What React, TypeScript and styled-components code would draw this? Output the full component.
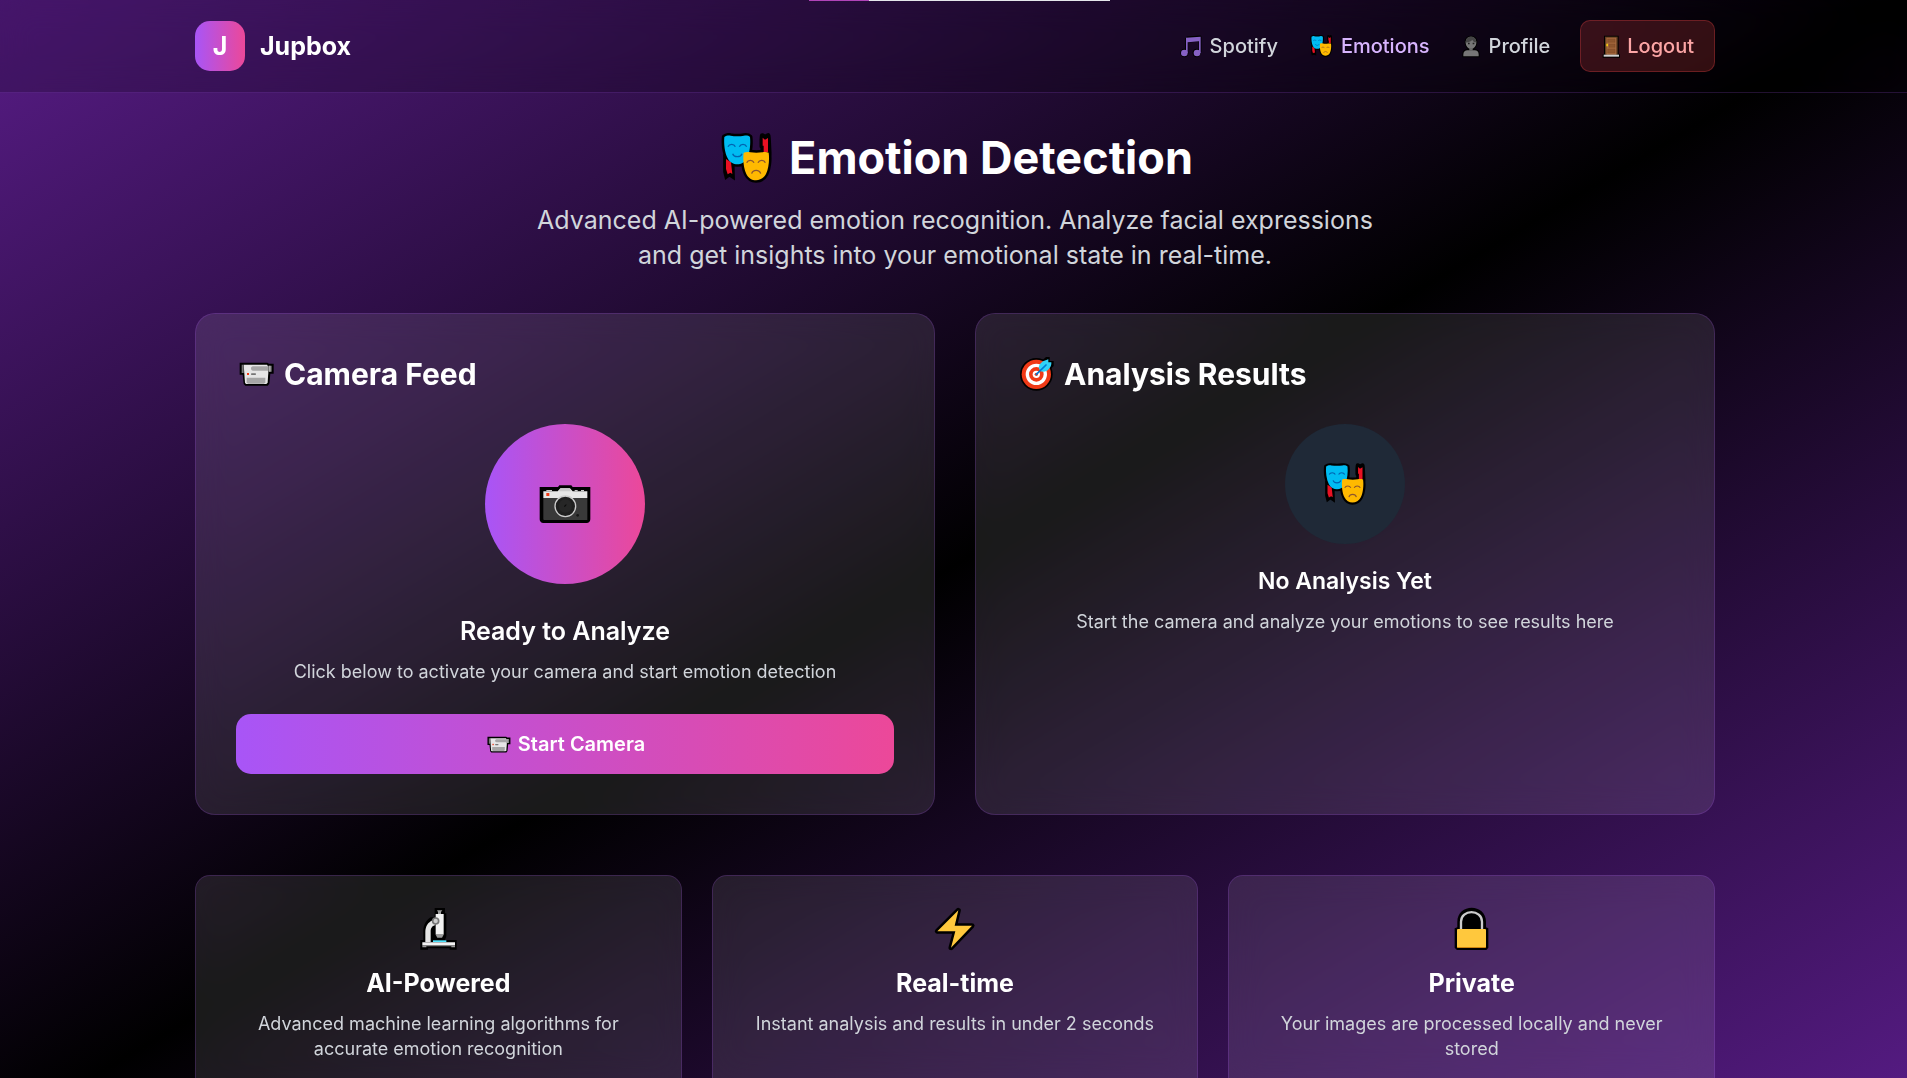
import React from 'react';
import styled, { createGlobalStyle, css } from 'styled-components';

const GlobalStyle = createGlobalStyle`
  *, *::before, *::after { box-sizing: border-box; }
  html { background: #000; }
  body {
    margin: 0;
    font-family: Inter, 'Liberation Sans', sans-serif;
    color: #fff;
  }
  h1, h2, h3, p { margin: 0; }
`;

const accent = 'linear-gradient(to right, #a855f7, #ec4899)';

/* ---------- layout ---------- */

const Page = styled.div`
  position: relative;
  min-height: 100vh;
  padding-left: 3px;
  background: linear-gradient(to bottom right, #581c87, #000, #581c87);
`;

const Header = styled.header`
  margin-left: -3px;
  padding-left: 3px;
  background: rgba(0, 0, 0, 0.2);
  border-bottom: 1px solid rgba(168, 85, 247, 0.2);
  backdrop-filter: blur(16px);
`;

const container = css`
  max-width: 1600px;
  margin: 0 auto;
  @media (max-width: 700px) {
    padding-left: 20px;
    padding-right: 20px;
  }
`;

const HeaderInner = styled.div`
  padding: 20px 40px;
  ${container}
  display: flex;
  flex-wrap: wrap;
  gap: 20px;
  align-items: center;
  justify-content: space-between;
`;

const Main = styled.main`
  padding: 40px;
  ${container}
`;

const Progress = styled.div`
  position: absolute;
  z-index: 2;
  top: 0;
  left: 50%;
  width: 301px;
  height: 1px;
  margin-left: -145px;
  background: #e5e7eb;
`;

const ProgressFill = styled.div`
  height: 100%;
  background: #b044b8;
`;

/* ---------- header ---------- */

const Brand = styled.a`
  display: flex;
  align-items: center;
  gap: 15px;
  color: #fff;
  font-size: 25px;
  line-height: 35px;
  font-weight: 700;
  text-decoration: none;
`;

const BrandMark = styled.span`
  display: flex;
  align-items: center;
  justify-content: center;
  width: 50px;
  height: 50px;
  border-radius: 15px;
  background: ${accent};
`;

const Nav = styled.nav`
  display: flex;
  flex-wrap: wrap;
  align-items: center;
  gap: 30px;
`;

const navItem = css`
  display: flex;
  align-items: center;
  gap: 6px;
  font-family: inherit;
  font-size: 20px;
  line-height: 30px;
  font-weight: 500;
`;

const NavLink = styled.a<{ $active?: boolean }>`
  ${navItem}
  color: ${(p) => (p.$active ? '#d8b4fe' : '#d1d5db')};
  text-decoration: none;
`;

const LogoutButton = styled.button`
  ${navItem}
  padding: 10px 20px;
  color: #fca5a5;
  background: rgba(239, 68, 68, 0.2);
  border: 1px solid rgba(239, 68, 68, 0.3);
  border-radius: 10px;
  cursor: pointer;
`;

/* ---------- content ---------- */

const Intro = styled.section`
  margin-bottom: 40px;
  text-align: center;
`;

const PageTitle = styled.h1`
  display: flex;
  align-items: center;
  justify-content: center;
  gap: 12px;
  margin-bottom: 20px;
  font-size: 45px;
  line-height: 50px;
  font-weight: 700;
`;

const Lead = styled.p`
  max-width: 840px;
  margin: 0 auto;
  font-size: 25px;
  line-height: 35px;
  color: #d1d5db;
`;

const Panels = styled.div`
  display: grid;
  grid-template-columns: repeat(2, minmax(0, 1fr));
  gap: 40px;
  @media (max-width: 1000px) {
    grid-template-columns: minmax(0, 1fr);
  }
`;

const glass = css`
  background: rgba(255, 255, 255, 0.1);
  border: 1px solid rgba(168, 85, 247, 0.2);
  backdrop-filter: blur(16px);
`;

const Panel = styled.section`
  ${glass}
  padding: 40px;
  border-radius: 20px;
`;

const PanelTitle = styled.h2`
  display: flex;
  align-items: center;
  gap: 8px;
  margin-bottom: 30px;
  font-size: 30px;
  line-height: 40px;
  font-weight: 700;
`;

const PanelBody = styled.div`
  text-align: center;
`;

const Disc = styled.div<{ $size: number; $fill: string; $space: number }>`
  display: flex;
  align-items: center;
  justify-content: center;
  width: ${(p) => p.$size}px;
  height: ${(p) => p.$size}px;
  margin: 0 auto ${(p) => p.$space}px;
  border-radius: 50%;
  background: ${(p) => p.$fill};
`;

const Subtitle = styled.h3<{ $size?: number; $weight?: number }>`
  margin-bottom: 10px;
  font-size: ${(p) => p.$size ?? 25}px;
  line-height: 35px;
  font-weight: ${(p) => p.$weight ?? 600};
`;

const Note = styled.p`
  font-size: 18px;
  line-height: 25px;
  color: #d1d5db;
`;

const StartButton = styled.button`
  display: flex;
  align-items: center;
  justify-content: center;
  gap: 6px;
  width: 100%;
  margin-top: 30px;
  padding: 15px 30px;
  border: 0;
  border-radius: 15px;
  background: ${accent};
  color: #fff;
  font-family: inherit;
  font-size: 20px;
  line-height: 30px;
  font-weight: 600;
  cursor: pointer;
`;

const Features = styled.div`
  display: grid;
  grid-template-columns: repeat(3, minmax(0, 1fr));
  gap: 30px;
  margin-top: 60px;
  @media (max-width: 1000px) {
    grid-template-columns: minmax(0, 1fr);
  }
`;

const Feature = styled.article`
  ${glass}
  padding: 30px;
  border-radius: 15px;
  text-align: center;
`;

const FeatureIcon = styled.div`
  display: flex;
  justify-content: center;
  margin-bottom: 15px;
`;

/* ---------- pictograms ---------- */

const Glyph = styled.svg`
  display: block;
  flex: none;
`;

type IconProps = { w: number; h: number };

const Masks = ({ w, h }: IconProps) => (
  <Glyph width={w} height={h} viewBox="54 400 180 150" aria-hidden="true">
    <g stroke="#000" strokeWidth="15" strokeLinejoin="round">
      <path d="M190 408l8 5 9-5 1 8 2 40-1 10h-17V440h-3V420z" />
      <path d="M80 478v38l3 12 8-6 9 6-1-36z" strokeLinejoin="miter" />
      <path d="M76 412c6-5 14-5 19-4 12 2 28 2 40 0 8-1 14 0 18 4 2 20 0 46-9 64-6 12-18 18-29 18s-23-6-29-18c-9-18-12-44-10-64z" />
      <path d="M134 459c8-3 14-2 20-1 12 2 24 2 36 0 7-1 14-1 19 1 3 20 0 48-8 64-6 12-18 19-30 19s-23-7-29-19c-8-16-11-44-8-64z" />
    </g>
    <path d="M191 414l7 6 9-5v42h-13V438h-3z" fill="#e81123" />
    <path d="M81 478v30l5 16 8-5 6 4-4-35z" fill="#e81123" />
    <path d="M76 412c6-5 14-5 19-4 12 2 28 2 40 0 8-1 14 0 18 4 2 20 0 46-9 64-6 12-18 18-29 18s-23-6-29-18c-9-18-12-44-10-64z" fill="#00bcf2" />
    <path d="M134 459c8-3 14-2 20-1 12 2 24 2 36 0 7-1 14-1 19 1 3 20 0 48-8 64-6 12-18 19-30 19s-23-7-29-19c-8-16-11-44-8-64z" fill="#ffb900" />
    <g fill="none" strokeWidth="4">
      <path d="M87 441c4-9 18-9 22 0M121 441c4-9 18-9 22 0M101 462c4 12 24 12 28 0" stroke="#0063b1" />
      <path d="M143 489c4-9 18-9 22 0M177 489c4-9 18-9 22 0M158 522c4-13 23-13 27 0" stroke="#8e562e" />
    </g>
  </Glyph>
);

const Music = ({ w, h }: IconProps) => (
  <Glyph width={w} height={h} viewBox="1431 97 81 81" aria-hidden="true">
    <g fill="none" stroke="#000" strokeWidth="9" strokeLinejoin="round">
      <path d="M1460 112l40-3v46M1460 112v43M1460 122l40-4" />
      <circle cx="1453" cy="157" r="8" />
      <circle cx="1490" cy="157" r="8" />
    </g>
    <path d="M1458 111l44-3v49h-5v-35l-34 3v32h-5z" fill="#8661c5" />
    <circle cx="1453" cy="157" r="10" fill="#8661c5" />
    <circle cx="1491" cy="157" r="10" fill="#8661c5" />
  </Glyph>
);

const Person = ({ w, h }: IconProps) => (
  <Glyph width={w} height={h} viewBox="0 0 69 81" aria-hidden="true">
    <path d="M33 11c10 0 16 7 16 17 0 12-7 20-16 20s-16-8-16-20c0-10 6-17 16-17zM10 70V64c0-8 6-12 12-12h22c7 0 12 4 12 12v6z" fill="#767676" stroke="#000" strokeWidth="6" paintOrder="stroke" />
    <path d="M17 29c0-12 6-18 16-18s16 7 16 17c-6 0-10-2-12-8-4 6-12 6-20 9z" fill="#454545" />
    <path d="M24 29h5v5h-5zM38 29h5v5h-5z" fill="#1f1f1f" />
    <path d="M28 45h10v8H28z" fill="#686868" />
  </Glyph>
);

const Door = ({ w, h }: IconProps) => (
  <Glyph width={w} height={h} viewBox="0 0 60 81" aria-hidden="true">
    <path d="M9 8h44v56h4v10H5V64h4z" fill="#000" />
    <path d="M12 11h38v54H12z" fill="#603d20" />
    <path d="M16 14h30v51H16z" fill="#a4683c" />
    <path d="M20 18h22v10H20zM24 33h18v10H24zM20 48h22v12H20z" fill="#8e562e" stroke="#7a4724" strokeWidth="1" />
    <path d="M16 32h5v8h-5z" fill="#f2c811" />
    <path d="M8 65h46v6H8z" fill="#d2d2d2" />
  </Glyph>
);

const Camcorder = ({ w, h }: IconProps) => (
  <Glyph width={w} height={h} viewBox="138 133 120 120" aria-hidden="true">
    <path d="M149 159h83l5 3h14v30h-10l-3 30-5 6h-67l-5-5-3-28h-9z" fill="#000" />
    <path d="M161 165h70l4 6v17l-2 31-4 4h-61l-3-4z" fill="#e6e6e6" />
    <path d="M155 165h6v25h-6zM235 168h10v18h-10z" fill="#767676" />
    <path d="M189 170h46v13h-46c-8 0-8-13 0-13z" fill="#a6a6a6" />
    <path d="M238 168h3v18h-3z" fill="#ccc" />
    <path d="M170 204h56v14l-4 4h-48l-4-4z" fill="#a6a6a6" />
    <rect x="171" y="190" width="6" height="6" fill="#f03a17" />
    <rect x="183" y="191" width="15" height="5" rx="2" fill="#767676" />
  </Glyph>
);

const Target = ({ w, h }: IconProps) => (
  <Glyph width={w} height={h} viewBox="138 133 120 120" aria-hidden="true">
    <circle cx="199" cy="194" r="49" fill="#000" />
    <path d="M203 180l1-16 24-22h11v12h12v15l-22 23-14 1z" fill="#000" />
    <circle cx="199" cy="194" r="44" fill="#f03a17" />
    <circle cx="199" cy="194" r="27" fill="none" stroke="#fff" strokeWidth="10" />
    <circle cx="199" cy="194" r="11" fill="#fff" />
    <circle cx="199" cy="194" r="5" fill="#f03a17" />
    <path d="M207 177c-2-10 5-17 12-22l16-6v9h9c1 12-6 20-13 25-8 4-14 4-19 2z" fill="#31d2f7" />
    <path d="M199 194l29-28" stroke="#0078d4" strokeWidth="5" strokeLinecap="round" />
  </Glyph>
);

const Camera = ({ w, h }: IconProps) => (
  <Glyph width={w} height={h} viewBox="194 192 180 180" aria-hidden="true">
    <path d="M208 231h55l4-5h36l4 5h53v97c0 7-5 11-11 11H219c-7 0-11-5-11-11z" fill="#000" />
    <path d="M219 264h132v66H223c-3 0-4-2-4-4z" fill="#393939" />
    <path d="M219 244h43l8-9h29l8 9h44v20H219z" fill="#e6e6e6" />
    <path d="M271 235h27l4 9h-36z" fill="#ccc" />
    <path d="M228 240h17v4h-17zM313 240h9v4h-9zM332 240h9v4h-9z" fill="#ccc" />
    <rect x="228" y="249" width="9" height="9" fill="#f03a17" />
    <circle cx="285" cy="289" r="31" fill="#1f1f1f" stroke="#ccc" strokeWidth="4" />
    <circle cx="285" cy="288" r="20" fill="#262626" />
    <path d="M281 291c1-5 4-7 8-8-1 5-4 8-8 8z" fill="#0c0c0c" />
    <circle cx="322" cy="316" r="4" fill="#171717" />
  </Glyph>
);

const Microscope = ({ w, h }: IconProps) => (
  <Glyph width={w} height={h} viewBox="48 48 135 135" aria-hidden="true">
    <path d="M104 54h31v16h4v69l-4 11h35v29h-21v-4H84v4H61v-29h9v-27c0-17 7-31 22-41h12z" fill="#000" />
    <path d="M76 156v-29c0-18 8-30 22-36l8 14c-10 3-14 9-14 21v30z" fill="#e6e6e6" />
    <path d="M107 72h24v62h-24z" fill="#f2f2f2" />
    <path d="M107 134h24l-5 9h-14z" fill="#999" />
    <path d="M111 61h16l-4 5v6h-9v-6z" fill="#999" />
    <circle cx="107" cy="93" r="9" fill="#ccc" stroke="#767676" strokeWidth="5" />
    <path d="M99 151h40v5H99z" fill="#50e6ff" />
    <path d="M67 157h98v9H67z" fill="#f2f2f2" />
    <path d="M67 166h98v6h-11v-3H79v3H67z" fill="#999" />
  </Glyph>
);

const Bolt = ({ w, h }: IconProps) => (
  <Glyph width={w} height={h} viewBox="37 48 135 135" aria-hidden="true">
    <path d="M116 61L53 124h54l-13 49 63-66h-52z" fill="#ffc83d" stroke="#000" strokeWidth="15" strokeLinejoin="round" paintOrder="stroke" />
  </Glyph>
);

const Lock = ({ w, h }: IconProps) => (
  <Glyph width={w} height={h} viewBox="57 48 135 135" aria-hidden="true">
    <path d="M82 112V95c0-56 86-56 86 0v17l7 3v58l-6 7H81l-7-7v-58z" fill="#000" />
    <path d="M93 118V95c0-38 63-38 63 0v23" fill="none" stroke="#ccc" strokeWidth="7" />
    <rect x="81" y="117" width="87" height="56" rx="3" fill="#ffc83d" />
    <path d="M81 171h87v2H81z" fill="#d67d00" />
  </Glyph>
);

/* ---------- page ---------- */

const features = [
  { Icon: Microscope, title: 'AI-Powered', text: 'Advanced machine learning algorithms for accurate emotion recognition' },
  { Icon: Bolt, title: 'Real-time', text: 'Instant analysis and results in under 2 seconds' },
  { Icon: Lock, title: 'Private', text: 'Your images are processed locally and never stored' },
];

export default function App() {
  return (
    <>
      <GlobalStyle />
      <Page>
        <Progress aria-hidden="true">
          <ProgressFill style={{ width: '20%' }} />
        </Progress>
        <Header>
          <HeaderInner>
            <Brand href="#">
              <BrandMark>J</BrandMark>
              Jupbox
            </Brand>
            <Nav>
              <NavLink href="#spotify"><Music w={27} h={27} />Spotify</NavLink>
              <NavLink href="#emotions" $active aria-current="page"><Masks w={27} h={22} />Emotions</NavLink>
              <NavLink href="#profile"><Person w={23} h={27} />Profile</NavLink>
              <LogoutButton type="button"><Door w={20} h={27} />Logout</LogoutButton>
            </Nav>
          </HeaderInner>
        </Header>
        <Main>
          <Intro>
            <PageTitle><Masks w={60} h={50} />Emotion Detection</PageTitle>
            <Lead>
              Advanced AI-powered emotion recognition. Analyze facial expressions and get insights
              into your emotional state in real-time.
            </Lead>
          </Intro>
          <Panels>
            <Panel>
              <PanelTitle><Camcorder w={40} h={40} />Camera Feed</PanelTitle>
              <PanelBody>
                <Disc $size={160} $fill={accent} $space={30}><Camera w={60} h={60} /></Disc>
                <Subtitle>Ready to Analyze</Subtitle>
                <Note>Click below to activate your camera and start emotion detection</Note>
                <StartButton type="button"><Camcorder w={27} h={27} />Start Camera</StartButton>
              </PanelBody>
            </Panel>
            <Panel>
              <PanelTitle><Target w={40} h={40} />Analysis Results</PanelTitle>
              <PanelBody>
                <Disc $size={120} $fill="#1f2937" $space={20}><Masks w={50} h={42} /></Disc>
                <Subtitle $size={23}>No Analysis Yet</Subtitle>
                <Note>Start the camera and analyze your emotions to see results here</Note>
              </PanelBody>
            </Panel>
          </Panels>
          <Features>
            {features.map(({ Icon, title, text }) => (
              <Feature key={title}>
                <FeatureIcon><Icon w={45} h={45} /></FeatureIcon>
                <Subtitle $weight={700}>{title}</Subtitle>
                <Note>{text}</Note>
              </Feature>
            ))}
          </Features>
        </Main>
      </Page>
    </>
  );
}
